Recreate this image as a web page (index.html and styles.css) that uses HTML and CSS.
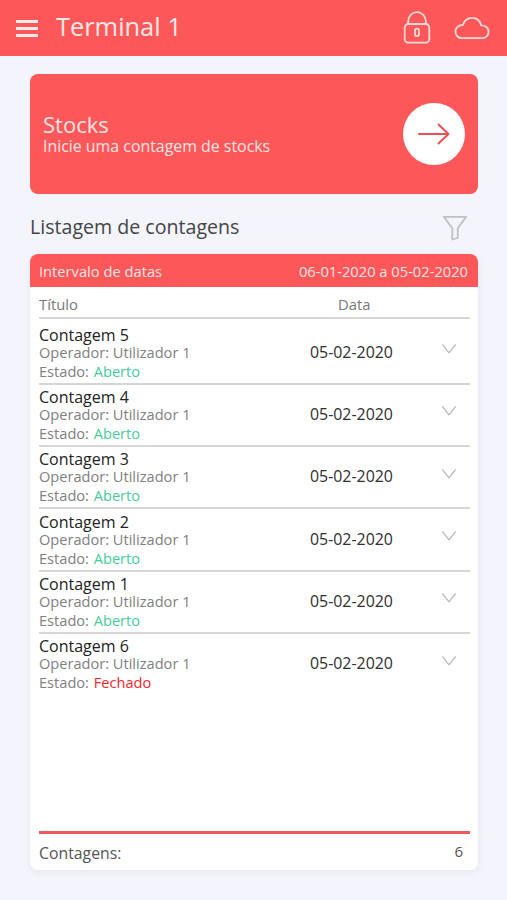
FILE: index.html
```html
<!DOCTYPE html>
<html lang="pt">
<head>
<meta charset="UTF-8">
<meta name="viewport" content="width=device-width, initial-scale=1.0">
<title>Terminal 1</title>
<link rel="stylesheet" href="styles.css">
</head>
<body>

<header class="topbar">
    <div class="menu">
        <span></span>
        <span></span>
        <span></span>
    </div>
    <h1>Terminal 1</h1>
    <svg class="lock" width="28" height="34" viewBox="0 0 28 34">
        <rect x="1.7" y="13" width="24.6" height="18.6" rx="3.5"/>
        <path d="M5.2 13V10a8.8 8.8 0 0 1 17.6 0V13"/>
        <rect x="12" y="17.6" width="4" height="7.4" rx="1.8"/>
    </svg>
    <svg class="cloud" width="36" height="24" viewBox="0 0 36 24">
        <path d="M8 22.2h20a6.4 6.4 0 0 0 6.6-6.4c0-4-3.4-6.6-7.4-6.4C26 4.6 22.5 1.8 18 1.8S10.2 4.6 8.8 9C4.6 8.8 1.4 12 1.4 15.6S4.2 22.2 8 22.2z"/>
    </svg>
</header>

<main class="content">
    <section class="stocks">
        <div class="stocks-text">
            <h2>Stocks</h2>
            <p>Inicie uma contagem de stocks</p>
        </div>
        <div class="go">
            <svg width="32" height="22" viewBox="0 0 32 22">
                <path d="M1 11H30M20.5 1.5L30.5 11L20.5 20.5"/>
            </svg>
        </div>
    </section>

    <div class="list-title">
        <h3>Listagem de contagens</h3>
        <svg width="26" height="26" viewBox="0 0 26 26">
            <path d="M1.8 1.8H24.2L15.8 13.3V23L10.3 24.5V13.3Z"/>
        </svg>
    </div>

    <section class="card">
        <div class="range">
            <span>Intervalo de datas</span>
            <span>06-01-2020 a 05-02-2020</span>
        </div>
        <div class="columns">
            <span>Título</span>
            <span class="col-date">Data</span>
        </div>
        <div class="rows">
            <div class="row">
                <div class="info">
                    <div class="name">Contagem 5</div>
                    <div class="operator">Operador: Utilizador 1</div>
                    <div class="state">Estado: <span class="open">Aberto</span></div>
                </div>
                <div class="date">05-02-2020</div>
                <svg class="chevron" width="14" height="10" viewBox="0 0 14 10"><path d="M0.7 0.8L7 8.8L13.300 0.8"/></svg>
            </div>
            <div class="row">
                <div class="info">
                    <div class="name">Contagem 4</div>
                    <div class="operator">Operador: Utilizador 1</div>
                    <div class="state">Estado: <span class="open">Aberto</span></div>
                </div>
                <div class="date">05-02-2020</div>
                <svg class="chevron" width="14" height="10" viewBox="0 0 14 10"><path d="M0.7 0.8L7 8.8L13.300 0.8"/></svg>
            </div>
            <div class="row">
                <div class="info">
                    <div class="name">Contagem 3</div>
                    <div class="operator">Operador: Utilizador 1</div>
                    <div class="state">Estado: <span class="open">Aberto</span></div>
                </div>
                <div class="date">05-02-2020</div>
                <svg class="chevron" width="14" height="10" viewBox="0 0 14 10"><path d="M0.7 0.8L7 8.8L13.300 0.8"/></svg>
            </div>
            <div class="row">
                <div class="info">
                    <div class="name">Contagem 2</div>
                    <div class="operator">Operador: Utilizador 1</div>
                    <div class="state">Estado: <span class="open">Aberto</span></div>
                </div>
                <div class="date">05-02-2020</div>
                <svg class="chevron" width="14" height="10" viewBox="0 0 14 10"><path d="M0.7 0.8L7 8.8L13.300 0.8"/></svg>
            </div>
            <div class="row">
                <div class="info">
                    <div class="name">Contagem 1</div>
                    <div class="operator">Operador: Utilizador 1</div>
                    <div class="state">Estado: <span class="open">Aberto</span></div>
                </div>
                <div class="date">05-02-2020</div>
                <svg class="chevron" width="14" height="10" viewBox="0 0 14 10"><path d="M0.7 0.8L7 8.8L13.300 0.8"/></svg>
            </div>
            <div class="row">
                <div class="info">
                    <div class="name">Contagem 6</div>
                    <div class="operator">Operador: Utilizador 1</div>
                    <div class="state">Estado: <span class="closed">Fechado</span></div>
                </div>
                <div class="date">05-02-2020</div>
                <svg class="chevron" width="14" height="10" viewBox="0 0 14 10"><path d="M0.7 0.8L7 8.8L13.300 0.8"/></svg>
            </div>
        </div>
        <div class="total">
            <span>Contagens:</span>
            <span class="count">6</span>
        </div>
    </section>
</main>

</body>
</html>
```

FILE: styles.css
```css
* {
    box-sizing: border-box;
}
body {
    margin: 0;
    height: 900px;
    display: flex;
    flex-direction: column;
    background-color: #f3f4fc;
    font-family: "Open Sans", sans-serif;
    color: #444;
}
h1, h2, h3, p {
    margin: 0;
    font-weight: 400;
}
svg {
    display: block;
    fill: none;
    stroke-linecap: round;
    stroke-linejoin: round;
}

/* top bar */
.topbar {
    height: 56px;
    padding: 0 17px 0 16px;
    display: flex;
    align-items: center;
    background-color: #fd5859;
    color: #ffe9e9;
}
.menu {
    width: 22px;
    margin-right: 18px;
    padding-top: 1px;
    display: grid;
    gap: 4px;
}
.menu span {
    height: 3px;
    background-color: #ffe9e9;
}
.topbar h1 {
    flex: 1;
    font-size: 25.4px;
    line-height: 36px;
    margin-bottom: 4px;
}
.topbar svg {
    stroke: #ffdada;
    stroke-width: 1.8;
}
.lock {
    margin-right: 23px;
}

.content {
    flex: 1;
    padding: 18px 29px 30px 30px;
    display: flex;
    flex-direction: column;
}

/* stocks banner */
.stocks {
    height: 120px;
    padding: 0 13px;
    display: flex;
    align-items: center;
    justify-content: space-between;
    border-radius: 8px;
    background-color: #fd5859;
    color: #ffe4e4;
}
.stocks h2 {
    font-size: 22px;
    line-height: 24px;
}
.stocks p {
    font-size: 15.9px;
    line-height: 21px;
}
.go {
    width: 62px;
    height: 62px;
    display: grid;
    place-items: center;
    border-radius: 50%;
    background-color: #fff;
}
.go svg {
    stroke: #f04e52;
    stroke-width: 2;
}

.list-title {
    height: 60px;
    padding: 7px 10px 0 0;
    display: flex;
    align-items: center;
    justify-content: space-between;
}
.list-title h3 {
    font-size: 19.6px;
    line-height: 26px;
    margin-bottom: 2px;
}
.list-title svg {
    stroke: #bfc0c4;
    stroke-width: 1.8;
}

/* counts list */
.card {
    flex: 1;
    display: flex;
    flex-direction: column;
    border-radius: 8px;
    background-color: #fff;
    box-shadow: 0 2px 10px rgba(0, 0, 0, 0.06);
}
.range {
    height: 33px;
    padding: 0 10px 0 9px;
    display: flex;
    align-items: center;
    justify-content: space-between;
    border-radius: 8px 8px 0 0;
    background-color: #fd5859;
    color: #ffe4e4;
    font-size: 14.7px;
}
.columns {
    height: 32px;
    margin: 0 8px 0 9px;
    padding-top: 3px;
    display: flex;
    align-items: center;
    border-bottom: 2px solid #d6d6d6;
    color: #777;
    font-size: 14.8px;
}
.columns span:first-child {
    width: 299px;
}
.rows {
    flex: 1;
    margin: 0 8px 0 9px;
    padding-top: 3.5px;
}
.row {
    height: 62.3px;
    display: flex;
    align-items: center;
    border-bottom: 2px solid #d6d6d6;
}
.row:last-child {
    border-bottom-color: transparent;
}
.info {
    width: 271px;
    padding-top: 2px;
    color: #808080;
    font-size: 14.6px;
}
.name {
    color: #222;
    font-size: 16px;
    line-height: 18px;
}
.operator {
    line-height: 17px;
}
.state {
    line-height: 21px;
}
.open, .closed {
    margin-left: 1px;
}
.open {
    color: #48cb9c;
}
.closed {
    color: #f5252b;
}
.date {
    width: 132px;
    margin-bottom: 2px;
    color: #2e2e2e;
    font-size: 15.9px;
}
.chevron {
    margin-bottom: 7px;
    stroke: #b9b9b9;
    stroke-width: 1.3;
}
.total {
    height: 39px;
    margin: 0 8px 0 9px;
    padding: 1px 7px 0 0;
    display: flex;
    align-items: center;
    justify-content: space-between;
    border-top: 3px solid #ef5a5d;
    color: #555;
    font-size: 15.8px;
}
.count {
    font-size: 15px;
    margin-bottom: 3px;
}
```
